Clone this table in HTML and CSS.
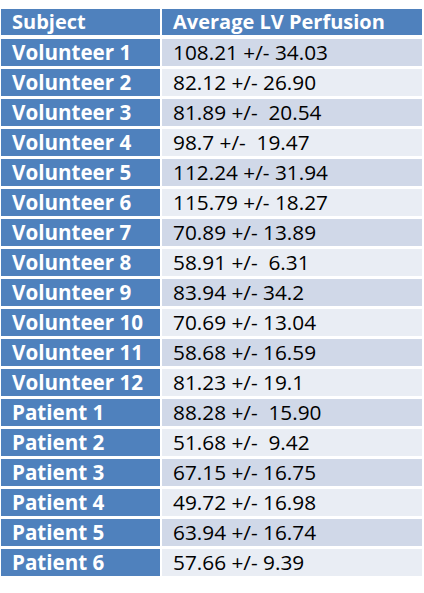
FILE: index.html
```html
<!DOCTYPE html>
<html>
<head>
<meta charset="utf-8">
<link rel="stylesheet" href="styles.css">
</head>
<body>
<div class="table">
  <div class="head">
    <div class="hcell">Subject</div>
    <div class="hcell">Average LV Perfusion</div>
  </div>
  <div class="body">
    <div class="subj">Volunteer 1</div><div class="val odd">108.21 +/- 34.03</div>
    <div class="subj">Volunteer 2</div><div class="val even">82.12 +/- 26.90</div>
    <div class="subj">Volunteer 3</div><div class="val odd">81.89 +/-  20.54</div>
    <div class="subj">Volunteer 4</div><div class="val even">98.7 +/-  19.47</div>
    <div class="subj">Volunteer 5</div><div class="val odd">112.24 +/- 31.94</div>
    <div class="subj">Volunteer 6</div><div class="val even">115.79 +/- 18.27</div>
    <div class="subj">Volunteer 7</div><div class="val odd">70.89 +/- 13.89</div>
    <div class="subj">Volunteer 8</div><div class="val even">58.91 +/-  6.31</div>
    <div class="subj">Volunteer 9</div><div class="val odd">83.94 +/- 34.2</div>
    <div class="subj">Volunteer 10</div><div class="val even">70.69 +/- 13.04</div>
    <div class="subj">Volunteer 11</div><div class="val odd">58.68 +/- 16.59</div>
    <div class="subj">Volunteer 12</div><div class="val even">81.23 +/- 19.1</div>
    <div class="subj">Patient 1</div><div class="val odd">88.28 +/-  15.90</div>
    <div class="subj">Patient 2</div><div class="val even">51.68 +/-  9.42</div>
    <div class="subj">Patient 3</div><div class="val odd">67.15 +/- 16.75</div>
    <div class="subj">Patient 4</div><div class="val even">49.72 +/- 16.98</div>
    <div class="subj">Patient 5</div><div class="val odd">63.94 +/- 16.74</div>
    <div class="subj">Patient 6</div><div class="val even">57.66 +/- 9.39</div>
  </div>
</div>
</body>
</html>
```
FILE: styles.css
```css
html, body {
  margin: 0;
  padding: 0;
  background: #ffffff;
}
body {
  padding: 9px 0 0 1px;
  font-family: "Open Sans", "Liberation Sans", sans-serif;
  font-size: 20px;
}
.table {
  width: 421px;
}
.head, .body {
  display: grid;
  grid-template-columns: 159px 260px;
  column-gap: 2px;
}
.head {
  margin-bottom: 4px;
}
.body {
  row-gap: 3px;
}
.hcell, .subj, .val {
  box-sizing: border-box;
  padding-left: 11px;
  white-space: pre;
}
.hcell {
  height: 26px;
  line-height: 26px;
  background: #4f81bd;
  color: #ffffff;
  font-weight: bold;
}
.subj {
  height: 27px;
  line-height: 27px;
  font-size: 20.6px;
  background: #4f81bd;
  color: #ffffff;
  font-weight: bold;
}
.val {
  height: 27px;
  line-height: 27px;
  font-size: 20.8px;
  color: #000000;
}
.odd { background: #d0d8e8; }
.even { background: #e9edf4; }
```
